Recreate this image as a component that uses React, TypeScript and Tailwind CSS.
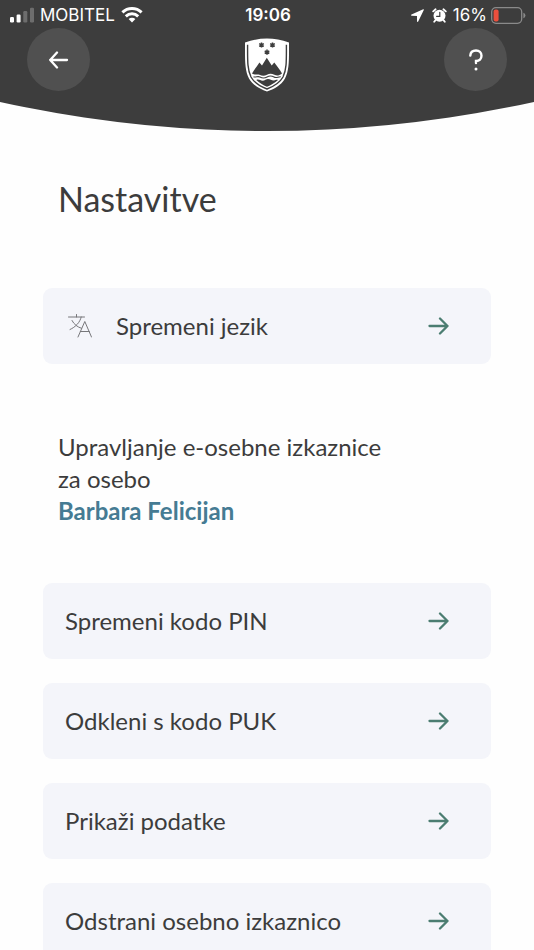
import type { ReactNode } from "react";

const actions = [
  "Spremeni kodo PIN",
  "Odkleni s kodo PUK",
  "Prikaži podatke",
  "Odstrani osebno izkaznico",
];

function StatusBar() {
  return (
    <div className="grid grid-cols-[1fr_auto_1fr] items-center h-7 pt-0.5 pl-2.5 pr-2 font-['Inter',sans-serif] text-[17px] leading-5">
      <div className="flex items-center gap-1.5">
        <svg width="24" height="16" viewBox="0 0 24 16" fill="#fff" aria-hidden="true">
          <rect x="0" y="10" width="4" height="5.5" rx="1.2" />
          <rect x="6.6" y="7.5" width="4" height="8" rx="1.2" />
          <rect x="13.3" y="4" width="4" height="11.5" rx="1.2" opacity="0.25" />
          <rect x="20" y="0.8" width="4" height="14.7" rx="1.2" opacity="0.25" />
        </svg>
        <span>MOBITEL</span>
        <svg width="22" height="16" viewBox="0 0 22 16" fill="none" stroke="#fff" strokeWidth="3" aria-hidden="true">
          <path d="M1.4 5.4C6.8 .3 15.2 .3 20.6 5.4" />
          <path d="M4.8 9.3C8.4 5.9 13.6 5.9 17.2 9.3" />
          <path d="M7.6 12.1C9.7 10.2 12.3 10.2 14.4 12.1L11 15.6Z" fill="#fff" stroke="none" />
        </svg>
      </div>
      <span className="font-semibold">19:06</span>
      <div className="flex items-center justify-end">
        <svg className="mr-2" width="13" height="13" viewBox="0 0 13 13" fill="#fff" aria-hidden="true">
          <path d="M12.2.2.5 5.6C-.2 6-.1 6.8.7 6.8L6 7v5.3c0 .8.8.9 1.2.2L12.8.9c.2-.5-.1-.9-.6-.7Z" />
        </svg>
        <svg className="mr-1.5" width="15" height="15" viewBox="0 0 15 15" aria-hidden="true">
          <circle cx="7.5" cy="7.8" r="6" fill="#fff" />
          <path d="M1.2 3.4 3.6 1.3M13.8 3.4 11.4 1.3M3.3 12.4 2.2 13.8M11.7 12.4l1.1 1.4" stroke="#fff" strokeWidth="1.8" strokeLinecap="round" />
          <path d="M7.8 4.3v4H4.6" fill="none" stroke="#3d3d3d" strokeWidth="1.2" strokeLinecap="round" />
        </svg>
        <span>16%</span>
        <svg className="ml-1" width="35" height="17" viewBox="0 0 35 17" aria-hidden="true">
          <rect x="0.7" y="0.7" width="30" height="15.6" rx="4.2" fill="none" stroke="#8a8a8a" strokeWidth="1.3" />
          <rect x="2.6" y="2.6" width="5" height="11.8" rx="2" fill="#eb4f3d" />
          <path d="M32.4 5.8q2 .6 2 2.7t-2 2.7Z" fill="#8a8a8a" />
        </svg>
      </div>
    </div>
  );
}

function CoatOfArms() {
  return (
    <svg width="46" height="54" viewBox="0 0 46 54" aria-label="Republika Slovenija" role="img">
      <path d="M1 4.6Q12 .5 23 .5T45 4.6C45 21 45.5 32 41 40.5 37 47.5 30 51 23 53.5 16 51 9 47.5 5 40.5 .5 32 1 21 1 4.6Z" fill="#fff" />
      <path d="M3.6 6.8C3.6 22 3.2 31.5 7 39 10.5 45.3 16.5 48.5 23 51 29.5 48.5 35.5 45.3 39 39 42.8 31.5 42.4 22 42.4 6.8" fill="none" stroke="#3d3d3d" strokeWidth="1.4" />
      <path d="M8 35.5C10 32 12.5 29 15.4 24.6L18 27.5 22.8 19.8 27.7 27.5 30.3 24.6C33.5 29 36 32 38 35.5 34.5 38.2 32.5 37.7 30.4 36.8 27.5 35.5 25.5 35.5 23 36.8 20.5 38.1 18.2 38.1 15.4 36.8 13.2 35.8 11 37.5 8 35.5Z" fill="#3d3d3d" />
      <path d="M9.5 38.7C12 39.9 13.5 37.7 16 39 18.5 40.5 20.5 40.5 23 39 25.5 37.6 27.5 37.6 30 39 32.5 40.5 34 38.5 36.7 38.7" fill="none" stroke="#3d3d3d" strokeWidth="1.1" />
      <path d="M12.3 42C14.5 40.7 16.5 42.6 18.5 42.7 21 42.7 22 41 24 41 26.5 41 27.5 42.7 30 42.5 31.5 42.4 32.5 41.5 34 42 31 45 27 47 23 48.8 19 47 15.3 45 12.3 42Z" fill="#3d3d3d" />
      <g stroke="#3d3d3d" strokeWidth="1.5">
        <path d="M17.5 4.4v5.2M15.2 5.7l4.6 2.6M19.8 5.7l-4.6 2.6" />
        <path d="M28.5 4.4v5.2M26.2 5.7l4.6 2.6M30.8 5.7l-4.6 2.6" />
        <path d="M23 11.6v5.2M20.7 12.9l4.6 2.6M25.3 12.9l-4.6 2.6" />
      </g>
    </svg>
  );
}

function RoundButton({ label, children }: { label: string; children: ReactNode }) {
  return (
    <button
      type="button"
      aria-label={label}
      className="w-[63px] h-[63px] rounded-full bg-[#505050] flex items-center justify-center cursor-pointer"
    >
      {children}
    </button>
  );
}

function Header() {
  return (
    <header className="relative h-[131px] shrink-0 overflow-hidden text-white">
      {/* bottom arc of a very wide circle */}
      <div className="absolute bottom-0 left-1/2 w-[466%] aspect-square -translate-x-1/2 rounded-full bg-[#3d3d3d]" />
      <div className="relative">
        <StatusBar />
        <div className="flex justify-between items-start px-[27px]">
          <RoundButton label="Nazaj">
            <svg width="20" height="18" viewBox="0 0 20 18" fill="none" stroke="#fff" strokeWidth="2.3" strokeLinecap="round" strokeLinejoin="round" aria-hidden="true">
              <path d="M18 9H1.2M8 1.5 1.2 9 8 16.5" />
            </svg>
          </RoundButton>
          <div className="pt-2.5">
            <CoatOfArms />
          </div>
          <RoundButton label="Pomoč">
            <svg width="14" height="22" viewBox="0 0 14 22" fill="none" stroke="#fff" strokeWidth="2.4" strokeLinecap="round" aria-hidden="true">
              <path d="M1.3 6.6C1.5 3.4 3.8 1.5 7 1.5s5.5 2 5.5 5.3c0 3-2.1 5.2-5.5 5.2v2" />
              <circle cx="7" cy="20" r="1.5" fill="#fff" stroke="none" />
            </svg>
          </RoundButton>
        </div>
      </div>
    </header>
  );
}

function TranslateIcon() {
  return (
    <svg width="24" height="24" viewBox="0 0 24 24" fill="none" stroke="#77777a" strokeWidth="1" strokeLinecap="round" aria-hidden="true">
      <path d="M.5 3h16M8.5 .5V3M13.2 3C12 8.500 7.500 13 2 15.500M4 6.500C6 10.500 9.500 13 13.500 14.300" />
      <path d="M10 23 16.800 7.500 23.500 23M12.300 17.500h9" />
    </svg>
  );
}

function ActionRow({ label, icon }: { label: string; icon?: ReactNode }) {
  return (
    <button
      type="button"
      className="w-full h-[76px] flex items-center pr-[42px] rounded-[9px] bg-[#f4f5fa] text-left cursor-pointer"
    >
      {icon && <span className="ml-[25px] mr-0.5">{icon}</span>}
      <span className="flex-1 pl-[22px]">{label}</span>
      <svg width="21" height="18" viewBox="0 0 21 18" fill="none" stroke="#4b7d71" strokeWidth="2.3" strokeLinecap="round" strokeLinejoin="round" aria-hidden="true">
        <path d="M1.5 9h18M12 1.5 19.5 9 12 16.5" />
      </svg>
    </button>
  );
}

export default function App() {
  return (
    <div className="h-screen flex flex-col overflow-hidden bg-[#fefefe] text-[#3c3c3c] font-['Lato',sans-serif] text-2xl leading-8">
      <Header />
      <main className="px-[43px] pt-[46px]">
        <h1 className="pl-[15px] text-[34px] leading-11">Nastavitve</h1>
        <div className="pt-[67px]">
          <ActionRow label="Spremeni jezik" icon={<TranslateIcon />} />
        </div>
        <p className="pt-[67px] pl-[15px] w-[360px]">
          Upravljanje e-osebne izkaznice za osebo
          <strong className="block font-bold text-[#457b93]">Barbara Felicijan</strong>
        </p>
        <div className="flex flex-col gap-6 pt-14">
          {actions.map((label) => (
            <ActionRow key={label} label={label} />
          ))}
        </div>
      </main>
    </div>
  );
}
